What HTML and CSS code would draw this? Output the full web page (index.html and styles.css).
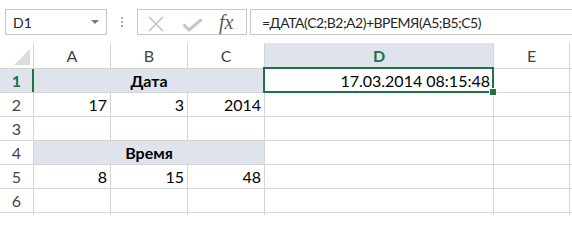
FILE: index.html
```html
<!DOCTYPE html>
<html>
<head>
<meta charset="utf-8">
<link rel="stylesheet" href="styles.css">
</head>
<body>
<div class="toolbar">
  <div class="namebox"><span class="nb-text">D1</span><span class="caret"></span></div>
  <div class="grip"><i></i><i></i><i></i></div>
  <div class="fxbox">
    <svg class="ico-x" width="18" height="16" viewBox="0 0 18 16"><path d="M2 1 L16 15 M16 1 L2 15" stroke="#c3c3c3" stroke-width="1.6" fill="none"/></svg>
    <svg class="ico-ok" width="21" height="14" viewBox="0 0 21 14"><path d="M1.5 6.5 L7 12 L19.5 1.5" stroke="#c6c6c6" stroke-width="3" fill="none"/></svg>
    <span class="fx">fx</span>
  </div>
  <div class="formula">=ДАТА(C2;B2;A2)+ВРЕМЯ(A5;B5;C5)</div>
</div>
<div class="sheet">
  <div class="corner"><svg width="16" height="16" viewBox="0 0 16 16"><polygon points="16,0 16,16 0,16" fill="#dcdcdc"/></svg></div>
  <div class="ch">A</div>
  <div class="ch">B</div>
  <div class="ch">C</div>
  <div class="ch ch-sel">D</div>
  <div class="ch">E</div>
  <div class="ch"></div>

  <div class="rh rh-sel">1</div>
  <div class="c merged">Дата</div>
  <div class="c num active">17.03.2014 08:15:48<span class="selbox"><span class="handle"></span></span></div>
  <div class="c"></div>
  <div class="c"></div>

  <div class="rh">2</div>
  <div class="c num">17</div>
  <div class="c num">3</div>
  <div class="c num">2014</div>
  <div class="c"></div>
  <div class="c"></div>
  <div class="c"></div>

  <div class="rh">3</div>
  <div class="c"></div>
  <div class="c"></div>
  <div class="c"></div>
  <div class="c"></div>
  <div class="c"></div>
  <div class="c"></div>

  <div class="rh">4</div>
  <div class="c merged">Время</div>
  <div class="c"></div>
  <div class="c"></div>
  <div class="c"></div>

  <div class="rh">5</div>
  <div class="c num">8</div>
  <div class="c num">15</div>
  <div class="c num">48</div>
  <div class="c"></div>
  <div class="c"></div>
  <div class="c"></div>

  <div class="rh">6</div>
  <div class="c"></div>
  <div class="c"></div>
  <div class="c"></div>
  <div class="c"></div>
  <div class="c"></div>
  <div class="c"></div>

  <div class="rh">7</div>
  <div class="c"></div>
  <div class="c"></div>
  <div class="c"></div>
  <div class="c"></div>
  <div class="c"></div>
  <div class="c"></div>
</div>
</body>
</html>
```
FILE: styles.css
```css
html, body {
  margin: 0;
  padding: 0;
  background: #ffffff;
}
body {
  width: 572px;
  height: 215px;
  overflow: hidden;
  font-family: Lato, "Liberation Sans", sans-serif;
  color: #000;
}
.toolbar {
  height: 43px;
  box-sizing: border-box;
  padding-top: 9px;
  display: flex;
  align-items: flex-start;
}
.namebox {
  margin-left: 5px;
  width: 102px;
  height: 26px;
  box-sizing: border-box;
  border: 1px solid #c6c6c6;
  display: flex;
  align-items: center;
  justify-content: space-between;
  padding: 0 7px 0 7px;
  font-size: 14px;
  color: #262626;
}
.caret {
  width: 0;
  height: 0;
  border-left: 4px solid transparent;
  border-right: 4px solid transparent;
  border-top: 4px solid #7a7a7a;
  margin-top: -1px;
}
.grip {
  margin-left: 14px;
  width: 3px;
  height: 26px;
  display: flex;
  flex-direction: column;
  justify-content: center;
  gap: 2px;
}
.grip i {
  display: block;
  width: 2px;
  height: 2px;
  background: #a8a8a8;
}
.fxbox {
  margin-left: 13px;
  width: 110px;
  height: 26px;
  box-sizing: border-box;
  border: 1px solid #c6c6c6;
  position: relative;
  display: flex;
  align-items: center;
}
.ico-x {
  margin-left: 9px;
  margin-top: 3px;
}
.ico-ok {
  margin-left: 17px;
  margin-top: 5px;
}
.fx {
  margin-left: 16px;
  font-family: "Liberation Serif", "DejaVu Serif", serif;
  font-style: italic;
  font-size: 20px;
  color: #5a5a5a;
}
.formula {
  margin-left: 3px;
  margin-right: -6px;
  flex: 1;
  height: 26px;
  box-sizing: border-box;
  border: 1px solid #c6c6c6;
  display: flex;
  align-items: center;
  padding-left: 11px;
  font-size: 14px;
  letter-spacing: -0.5px;
  color: #262626;
  white-space: nowrap;
}
.sheet {
  display: grid;
  grid-template-columns: 33px 76px 76px 76px 228px 75px 1fr;
  grid-template-rows: 25px repeat(7, 23px);
  gap: 1px;
  background: #d5d5d5;
  width: 572px;
}
.sheet > div {
  background: #ffffff;
  font-size: 16px;
  line-height: 23px;
  white-space: nowrap;
}
.corner {
  display: flex;
  align-items: flex-end;
  justify-content: flex-end;
  padding: 0 3px 3px 0;
  box-sizing: border-box;
}
.corner svg {
  display: block;
}
.sheet > .ch {
  line-height: 25px;
  text-align: center;
  color: #444444;
}
.sheet > .ch-sel {
  background: #dfe3ec;
  color: #217346;
  font-weight: 700;
}
.sheet > .rh {
  text-align: center;
  color: #444444;
}
.sheet > .rh-sel {
  background: #dfe3ec;
  color: #217346;
  font-weight: 700;
  box-shadow: inset -1px 0 0 #217346, 1px 0 0 #217346;
}
.sheet > .merged {
  grid-column: span 3;
  background: #dfe3ec;
  text-align: center;
  font-weight: 700;
}
.sheet > .num {
  text-align: right;
  padding-right: 3px;
}
.sheet > .active {
  position: relative;
}
.selbox {
  position: absolute;
  left: -2px;
  top: -2px;
  right: -1px;
  bottom: -1px;
  border: 2px solid #217346;
}
.handle {
  position: absolute;
  right: -5px;
  bottom: -5px;
  width: 6px;
  height: 6px;
  background: #217346;
  border: 1px solid #ffffff;
}
```
